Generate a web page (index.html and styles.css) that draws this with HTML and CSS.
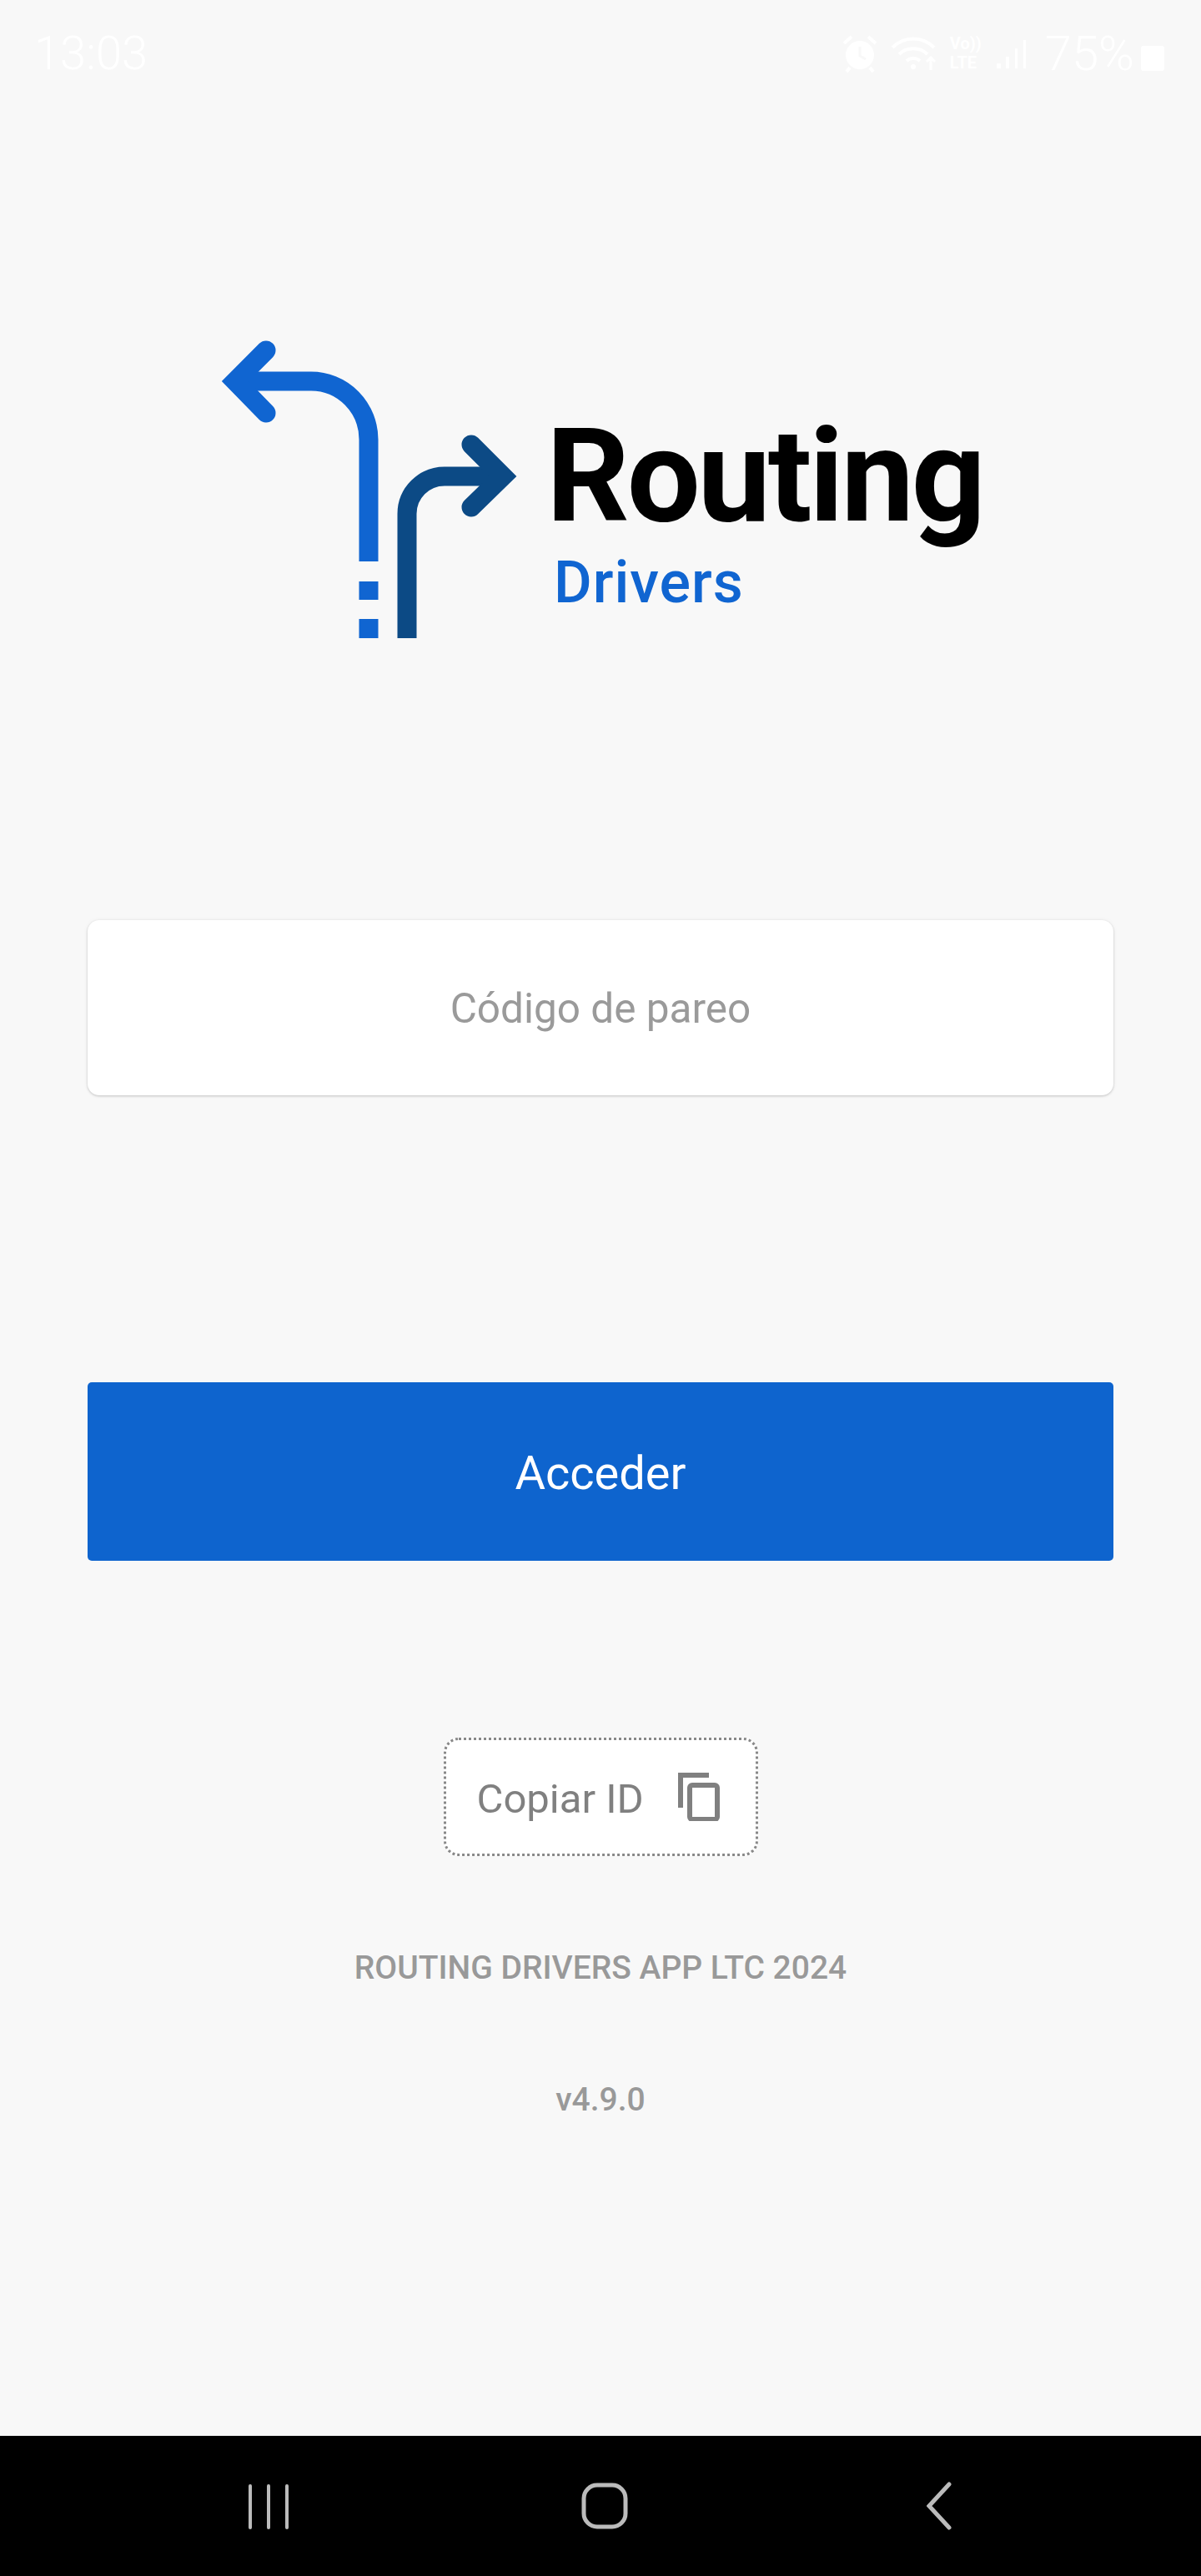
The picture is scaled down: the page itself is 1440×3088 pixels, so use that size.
FILE: index.html
```html
<!DOCTYPE html>
<html>
<head>
    <meta charset="utf-8">
    <meta name="viewport" content="width=device-width, initial-scale=1">
    <title>Routing Drivers</title>
    <link rel="stylesheet" href="styles.css">
</head>
<body>
    <div class="screen">
        <div class="status-bar">
            <span class="status-time">13:03</span>
            <div class="status-right">
                <svg class="status-alarm" width="40" height="46" viewBox="0 0 40 46">
                    <circle cx="20" cy="25" r="17" fill="#fff"/>
                    <path d="M1 11l9-8M39 11l-9-8M8 40l-4 5M32 40l4 5" stroke="#fff" stroke-width="4" fill="none"/>
                    <path d="M20 15v11l7 4" stroke="#f8f8f8" stroke-width="3" fill="none"/>
                </svg>
                <svg class="status-wifi" width="58" height="42" viewBox="0 0 58 42" fill="none" stroke="#fff" stroke-width="4">
                    <path d="M2 14c14-14 36-14 50 0M10 22c9-9 25-9 34 0M19 30c4-4 12-4 16 0"/>
                    <circle cx="27" cy="37" r="3" fill="#fff" stroke="none"/>
                    <path d="M48 41V26M43 31l5-5 5 5" stroke-width="3"/>
                </svg>
                <div class="status-volte"><span>Vo))</span><span>LTE</span></div>
                <svg class="status-signal" width="36" height="40" viewBox="0 0 36 40" fill="#fff">
                    <rect x="0" y="32" width="5" height="6"/>
                    <rect x="11" y="24" width="4" height="14"/>
                    <rect x="22" y="14" width="3" height="24"/>
                    <rect x="32" y="4" width="3" height="34"/>
                </svg>
                <span class="status-battery-text">75%</span>
                <div class="status-battery"></div>
            </div>
        </div>

        <div class="logo">
            <svg class="logo-mark" width="360" height="360" viewBox="262 405 360 360" fill="none" stroke-width="23">
                <g stroke="#1065d1">
                    <path d="M442 673V527a69 70 0 0 0-69-70H285"/>
                    <path d="M319 420L282 457L319 495" stroke-linecap="round"/>
                    <path d="M442 697v22M442 742v23"/>
                </g>
                <g stroke="#0c4a85">
                    <path d="M488 765V616a45 45 0 0 1 45-45h66"/>
                    <path d="M565 533L603 571L565 608" stroke-linecap="round"/>
                </g>
            </svg>
            <div class="logo-text">
                <div class="logo-title">Routing</div>
                <div class="logo-sub">Drivers</div>
            </div>
        </div>

        <input class="code-input" type="text" placeholder="Código de pareo">

        <button class="login-btn">Acceder</button>

        <div class="copy-btn">
            <span>Copiar ID</span>
            <svg width="50" height="58" viewBox="0 0 50 58" fill="none" stroke="#808080" stroke-width="6">
                <path d="M3 42V3h34"/>
                <rect x="14" y="15" width="33" height="41" rx="3"/>
            </svg>
        </div>

        <div class="footer-text">ROUTING DRIVERS APP LTC 2024</div>
        <div class="version-text">v4.9.0</div>

        <div class="nav-bar">
            <svg width="50" height="56" viewBox="0 0 50 56" fill="none" stroke="#bbb" stroke-width="4" stroke-linecap="round">
                <path d="M3 4v50M25 4v50M47 4v50"/>
            </svg>
            <svg width="56" height="56" viewBox="0 0 56 56" fill="none" stroke="#bbb" stroke-width="5">
                <rect x="3" y="3" width="50" height="50" rx="16"/>
            </svg>
            <svg width="30" height="58" viewBox="0 0 30 58" fill="none" stroke="#bbb" stroke-width="5" stroke-linecap="round">
                <path d="M27 3L3 29L27 55"/>
            </svg>
        </div>
    </div>
</body>
</html>
```
FILE: styles.css
```css
body {
    margin: 0;
    padding: 0;
    background-color: #f8f8f8;
    font-family: Roboto, "Liberation Sans", sans-serif;
}

.screen {
    height: 3088px;
    display: flex;
    flex-direction: column;
    align-items: center;
    overflow: hidden;
}

.status-bar {
    width: 100%;
    height: 100px;
    box-sizing: border-box;
    padding: 28px 44px 0 41px;
    display: flex;
    justify-content: space-between;
    align-items: flex-start;
    color: white;
}

.status-time {
    font-size: 56px;
    font-weight: 300;
    line-height: 72px;
}

.status-right {
    display: flex;
    align-items: center;
    height: 72px;
}

.status-alarm {
    margin-right: 17px;
}

.status-wifi {
    margin-right: 13px;
}

.status-volte {
    display: flex;
    flex-direction: column;
    font-size: 20px;
    font-weight: 700;
    line-height: 23px;
    margin-right: 18px;
}

.status-signal {
    margin-right: 22px;
}

.status-battery-text {
    font-size: 58px;
    font-weight: 300;
    line-height: 72px;
    margin-right: 8px;
}

.status-battery {
    width: 28px;
    height: 30px;
    margin-top: 12px;
    background: white;
    border-radius: 3px;
}

.logo {
    width: 100%;
    box-sizing: border-box;
    margin-top: 305px;
    padding-left: 262px;
    display: flex;
    align-items: flex-start;
}

.logo-mark {
    flex-shrink: 0;
}

.logo-text {
    margin-top: 88px;
    margin-left: 33px;
}

.logo-title {
    font-size: 156px;
    font-weight: 700;
    line-height: 156px;
    letter-spacing: -3.2px;
    color: black;
}

.logo-sub {
    margin-top: 9px;
    margin-left: 9px;
    font-size: 70px;
    font-weight: 500;
    line-height: 80px;
    letter-spacing: 1px;
    color: #1065d1;
}

.code-input {
    display: block;
    width: 1230px;
    height: 210px;
    box-sizing: border-box;
    margin-top: 338px;
    padding: 2px 0 0 0;
    border: none;
    outline: none;
    border-radius: 14px;
    background: white;
    box-shadow: 0 1px 3px rgba(0,0,0,0.2), 0 0 6px rgba(0,0,0,0.04);
    text-align: center;
    font-family: inherit;
    font-size: 49.5px;
    color: #333;
}

.code-input::placeholder {
    color: #9a9a9a;
}

.login-btn {
    display: block;
    width: 1230px;
    height: 214px;
    margin-top: 344px;
    padding: 4px 0 0 0;
    border: none;
    border-radius: 5px;
    background-color: #0e64ce;
    color: white;
    font-family: inherit;
    font-size: 56px;
    cursor: pointer;
}

.copy-btn {
    width: 377px;
    height: 142px;
    box-sizing: border-box;
    margin-top: 212px;
    padding: 0 43px 0 37px;
    display: flex;
    justify-content: space-between;
    align-items: center;
    background: white;
    border: 3px dotted #888;
    border-radius: 18px;
    font-size: 49px;
    color: #808080;
}

.copy-btn span {
    padding-top: 5px;
}

.footer-text {
    margin-top: 110px;
    font-size: 39px;
    font-weight: 500;
    line-height: 48px;
    color: #999;
}

.version-text {
    margin-top: 110px;
    font-size: 39px;
    font-weight: 500;
    line-height: 48px;
    color: #999;
}

.nav-bar {
    width: 100%;
    height: 168px;
    margin-top: auto;
    background: black;
    display: flex;
    align-items: center;
}

.nav-bar svg:nth-child(1) {
    margin-left: 297px;
}

.nav-bar svg:nth-child(2) {
    margin-left: 350px;
}

.nav-bar svg:nth-child(3) {
    margin-left: 358px;
}
```
